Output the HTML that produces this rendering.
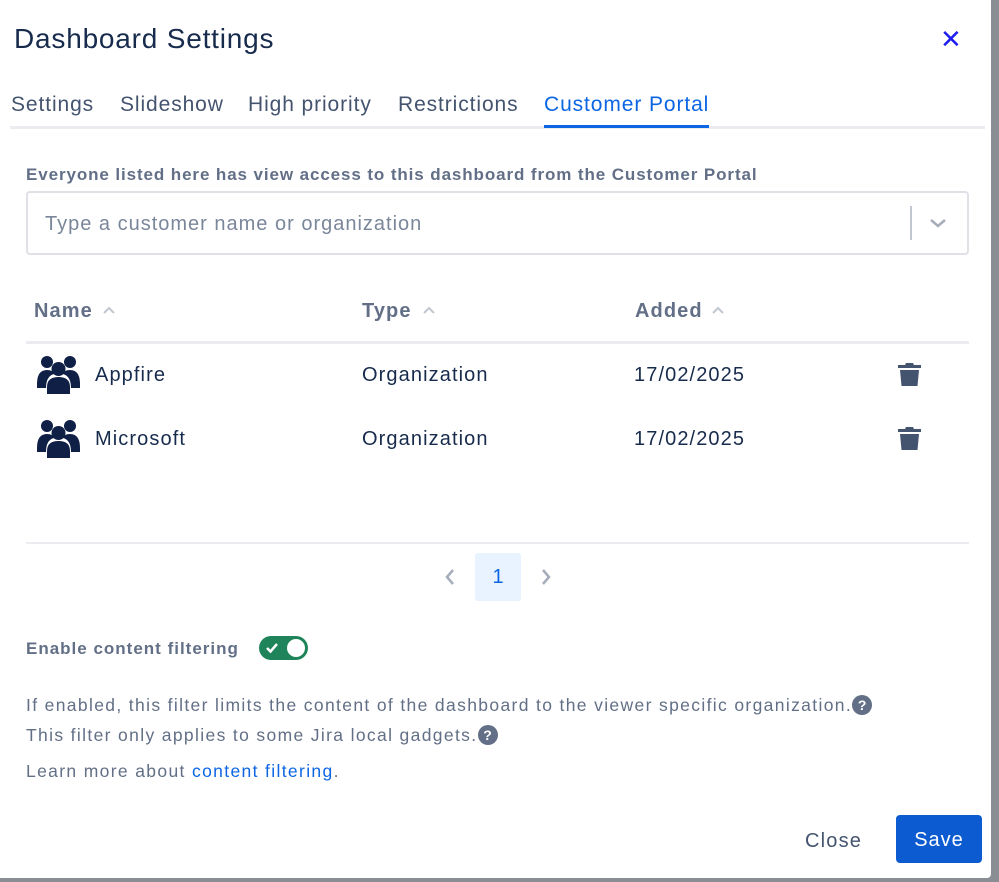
<!DOCTYPE html>
<html><head><meta charset="utf-8"><style>
body{margin:0;width:999px;height:882px;background:#8a8d93;font-family:"Liberation Sans",sans-serif;overflow:hidden;position:relative}
.m{position:absolute;left:0;top:0;width:991px;height:878px;background:#fff;border-radius:0 0 4px 0}
.a{position:absolute;white-space:nowrap}
.tab{font-size:21px;color:#44546f;top:93px;letter-spacing:0.9px}
.th{font-size:20px;color:#626f86;font-weight:bold;top:300px;letter-spacing:1.1px}
.td{font-size:20px;color:#172b4d;letter-spacing:1.1px}
.g{font-size:17.5px;color:#626f86;letter-spacing:1.35px}
.q{display:inline-block;width:20px;height:20px;border-radius:50%;background:#626f86;color:#fff;font-size:14px;font-weight:bold;text-align:center;line-height:20px;vertical-align:1px;letter-spacing:0}
</style></head><body>
<div class="m">
<div class="a" style="left:14px;top:23px;font-size:28px;color:#172b4d;letter-spacing:0.8px">Dashboard Settings</div>
<div class="a" style="left:940px;top:24px;font-size:26px;color:#1d1df0">✕</div>
<div class="a tab" style="left:11px">Settings</div>
<div class="a tab" style="left:120px">Slideshow</div>
<div class="a tab" style="left:248px">High priority</div>
<div class="a tab" style="left:398px">Restrictions</div>
<div class="a tab" style="left:544px;color:#0c66e4">Customer Portal</div>
<div class="a" style="left:10px;top:126px;width:975px;height:3px;background:#ebecf0"></div>
<div class="a" style="left:544px;top:125px;width:165px;height:3px;background:#0c66e4"></div>
<div class="a" style="left:26px;top:165px;font-size:17px;font-weight:bold;color:#626f86;letter-spacing:0.9px">Everyone listed here has view access to this dashboard from the Customer Portal</div>
<div class="a" style="left:26px;top:191px;width:939px;height:60px;border:2px solid #dfe1e6;border-radius:4px"></div>
<div class="a" style="left:45px;top:213px;font-size:20px;color:#7a869a;letter-spacing:1px">Type a customer name or organization</div>
<div class="a" style="left:910px;top:206px;width:2px;height:34px;background:#c1c7d0"></div>
<svg class="a" style="left:928px;top:216px" width="20" height="14"><path d="M3 4l7 6 7-6" stroke="#a5adba" stroke-width="2.5" fill="none"/></svg>
<div class="a th" style="left:34px">Name</div>
<div class="a th" style="left:362px">Type</div>
<div class="a th" style="left:635px">Added</div>
<svg class="a" style="left:102px;top:305px" width="14" height="10"><path d="M2 8l5-5 5 5" stroke="#c1c7d0" stroke-width="2" fill="none"/></svg>
<svg class="a" style="left:422px;top:305px" width="14" height="10"><path d="M2 8l5-5 5 5" stroke="#c1c7d0" stroke-width="2" fill="none"/></svg>
<svg class="a" style="left:711px;top:305px" width="14" height="10"><path d="M2 8l5-5 5 5" stroke="#c1c7d0" stroke-width="2" fill="none"/></svg>
<div class="a" style="left:26px;top:341px;width:943px;height:3px;background:#ebecf0"></div>
<svg class="a" style="left:37px;top:354px" width="43" height="40" viewBox="0 0 43 40"><g fill="#0f1f45"><circle cx="10" cy="8" r="6"/><circle cx="33" cy="8" r="6"/><circle cx="21.5" cy="15" r="7"/><path d="M0 30q0-14 10-14q6 0 7 4q-8 2-8 14H0z"/><path d="M43 30q0-14-10-14q-6 0-7 4q8 2 8 14h9z"/><path d="M10 40v-7q0-10 11.5-10T33 33v7z"/></g></svg>
<svg class="a" style="left:37px;top:418px" width="43" height="40" viewBox="0 0 43 40"><g fill="#0f1f45"><circle cx="10" cy="8" r="6"/><circle cx="33" cy="8" r="6"/><circle cx="21.5" cy="15" r="7"/><path d="M0 30q0-14 10-14q6 0 7 4q-8 2-8 14H0z"/><path d="M43 30q0-14-10-14q-6 0-7 4q8 2 8 14h9z"/><path d="M10 40v-7q0-10 11.5-10T33 33v7z"/></g></svg>
<div class="a td" style="left:95px;top:364px">Appfire</div>
<div class="a td" style="left:362px;top:364px">Organization</div>
<div class="a td" style="left:634px;top:364px">17/02/2025</div>
<div class="a td" style="left:95px;top:428px">Microsoft</div>
<div class="a td" style="left:362px;top:428px">Organization</div>
<div class="a td" style="left:634px;top:428px">17/02/2025</div>
<svg class="a" style="left:897px;top:362px" width="25" height="25" viewBox="0 0 25 25"><path fill="#44546f" d="M1 3h7l1-2h7l1 2h7v3H1zM3 8h19l-1.5 16h-16z"/></svg>
<svg class="a" style="left:897px;top:426px" width="25" height="25" viewBox="0 0 25 25"><path fill="#44546f" d="M1 3h7l1-2h7l1 2h7v3H1zM3 8h19l-1.5 16h-16z"/></svg>
<div class="a" style="left:26px;top:542px;width:943px;height:2px;background:#ebecf0"></div>
<svg class="a" style="left:443px;top:568px" width="14" height="18"><path d="M10 2L4 9l6 7" stroke="#a5adba" stroke-width="2.5" fill="none"/></svg>
<div class="a" style="left:475px;top:553px;width:46px;height:48px;background:#e9f2ff;border-radius:3px;color:#0c66e4;font-size:20px;text-align:center;line-height:48px">1</div>
<svg class="a" style="left:539px;top:568px" width="14" height="18"><path d="M4 2l6 7-6 7" stroke="#a5adba" stroke-width="2.5" fill="none"/></svg>
<div class="a" style="left:26px;top:639px;font-size:17px;font-weight:bold;color:#626f86;letter-spacing:1px">Enable content filtering</div>
<div class="a" style="left:259px;top:636px;width:49px;height:24px;background:#1f845a;border-radius:12px"></div>
<div class="a" style="left:287px;top:639px;width:18px;height:18px;background:#fff;border-radius:50%"></div>
<svg class="a" style="left:265px;top:641px" width="14" height="14"><path d="M2 7l3.5 3.5L12 3" stroke="#fff" stroke-width="2.5" fill="none"/></svg>
<div class="a g" style="left:26px;top:695px">If enabled, this filter limits the content of the dashboard to the viewer specific organization.<span class="q">?</span></div>
<div class="a g" style="left:26px;top:725px">This filter only applies to some Jira local gadgets.<span class="q">?</span></div>
<div class="a g" style="left:26px;top:761px">Learn more about <span style="color:#0c66e4">content filtering</span>.</div>
<div class="a" style="left:805px;top:830px;font-size:20px;color:#44546f;letter-spacing:1.2px">Close</div>
<div class="a" style="left:896px;top:815px;width:86px;height:48px;background:#0c5bd0;border-radius:4px;color:#fff;font-size:20px;text-align:center;line-height:50px;letter-spacing:1px">Save</div>
</div>
</body></html>
